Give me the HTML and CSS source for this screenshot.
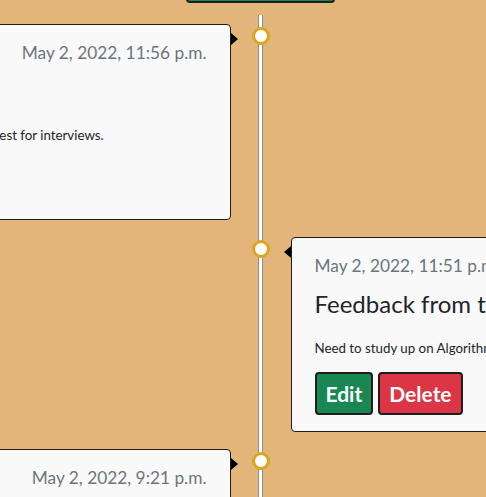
FILE: index.html
```html
<!DOCTYPE html>
<html lang="en">
<head>
<meta charset="utf-8">
<title>Timeline</title>
<link rel="stylesheet" href="styles.css">
</head>
<body>
<div class="page">
  <div class="top">
    <a class="btn btn-success btn-add" href="#">Add Entry</a>
  </div>
  <div class="timeline">
    <div class="item item-left">
      <div class="card">
        <h5 class="card-date">May 2, 2022, 11:56 p.m.</h5>
        <h4 class="card-title">Mock interview</h4>
        <p class="card-text">Review the questions that work best for interviews.</p>
        <div class="actions">
          <a class="btn btn-success" href="#">Edit</a>
          <a class="btn btn-danger" href="#">Delete</a>
        </div>
      </div>
      <div class="marker">
        <span class="arrow arrow-right"></span>
        <span class="dot"></span>
      </div>
    </div>
    <div class="item item-right">
      <div class="marker">
        <span class="dot"></span>
        <span class="arrow arrow-left"></span>
      </div>
      <div class="card">
        <h5 class="card-date">May 2, 2022, 11:51 p.m.</h5>
        <h4 class="card-title">Feedback from technical interview</h4>
        <p class="card-text">Need to study up on Algorithms and data structures.</p>
        <div class="actions">
          <a class="btn btn-success" href="#">Edit</a>
          <a class="btn btn-danger" href="#">Delete</a>
        </div>
      </div>
    </div>
    <div class="item item-left">
      <div class="card">
        <h5 class="card-date">May 2, 2022, 9:21 p.m.</h5>
        <h4 class="card-title">Applied</h4>
        <p class="card-text">Sent in my application and resume.</p>
        <div class="actions">
          <a class="btn btn-success" href="#">Edit</a>
          <a class="btn btn-danger" href="#">Delete</a>
        </div>
      </div>
      <div class="marker">
        <span class="arrow arrow-right"></span>
        <span class="dot"></span>
      </div>
    </div>
  </div>
</div>
</body>
</html>
```

FILE: styles.css
```css
html, body {
  margin: 0;
  padding: 0;
  overflow: hidden;
}

body {
  background: #e4b57b;
  font-family: Lato, "Open Sans", Arial, sans-serif;
  color: #212529;
}

.page {
  width: 960px;
  margin-left: -219.5px;
}

.top {
  height: 3px;
  display: flex;
  justify-content: center;
  align-items: flex-end;
  margin-bottom: 12px;
}

.btn {
  display: inline-block;
  box-sizing: border-box;
  font-family: Lato, "Open Sans", Arial, sans-serif;
  font-weight: 700;
  font-size: 21px;
  line-height: 30px;
  padding: 4.5px 9px;
  border: 2px solid #1e1e1e;
  border-radius: 4px;
  color: #fff;
  text-decoration: none;
}

.btn-success {
  background: #198754;
}

.btn-danger {
  background: #dc3545;
}

.btn-add {
  width: 149px;
  text-align: center;
  flex: none;
}

.timeline {
  display: flex;
  flex-direction: column;
  gap: 17px;
  padding-top: 9px;
  background: linear-gradient(to right,
    transparent 477.5px,
    #8e8e8e 477.5px, #8e8e8e 478.5px,
    #ffffff 478.5px, #ffffff 481.5px,
    #8e8e8e 481.5px, #8e8e8e 482.5px,
    transparent 482.5px);
}

.item {
  display: grid;
  grid-template-columns: 450px 60px 450px;
  align-items: start;
}

.item-left .card {
  grid-column: 1;
}

.item-left .marker {
  grid-column: 2;
  grid-template-columns: 7px 14px 18px 1fr;
}

.item-right .marker {
  grid-column: 2;
  grid-template-columns: 1fr 18px 14px 7px;
}

.item-right .card {
  grid-column: 3;
}

.marker {
  display: grid;
  align-items: start;
}

.item-left .arrow { grid-column: 1; }
.item-left .dot { grid-column: 3; }
.item-right .dot { grid-column: 2; }
.item-right .arrow { grid-column: 4; }

.dot {
  box-sizing: border-box;
  width: 18px;
  height: 18px;
  margin-top: 3px;
  border: 3px solid #daa520;
  border-radius: 50%;
  background: #fff;
}

.arrow {
  width: 0;
  height: 0;
  margin-top: 9px;
  border-top: 6.5px solid transparent;
  border-bottom: 6.5px solid transparent;
}

.arrow-right {
  border-left: 7px solid #000;
}

.arrow-left {
  border-right: 7px solid #000;
}

.card {
  box-sizing: border-box;
  background: #f9f9f9;
  border: 1px solid #231b15;
  border-radius: 4px;
  padding: 18px 23px 16px;
}

.card-date {
  margin: 0 0 14px;
  font-size: 17.3px;
  font-weight: 400;
  line-height: 1.2;
  color: #6c757d;
}

.item-left .card-date {
  text-align: right;
}

.card-title {
  margin: 0 0 18.5px;
  font-size: 24px;
  font-weight: 400;
  line-height: 1.2;
  color: #212529;
  white-space: nowrap;
}

.card-text {
  margin: 0 0 14.5px;
  font-size: 13.3px;
  line-height: 20px;
  white-space: nowrap;
}

.actions {
  display: flex;
  gap: 5px;
}
```
